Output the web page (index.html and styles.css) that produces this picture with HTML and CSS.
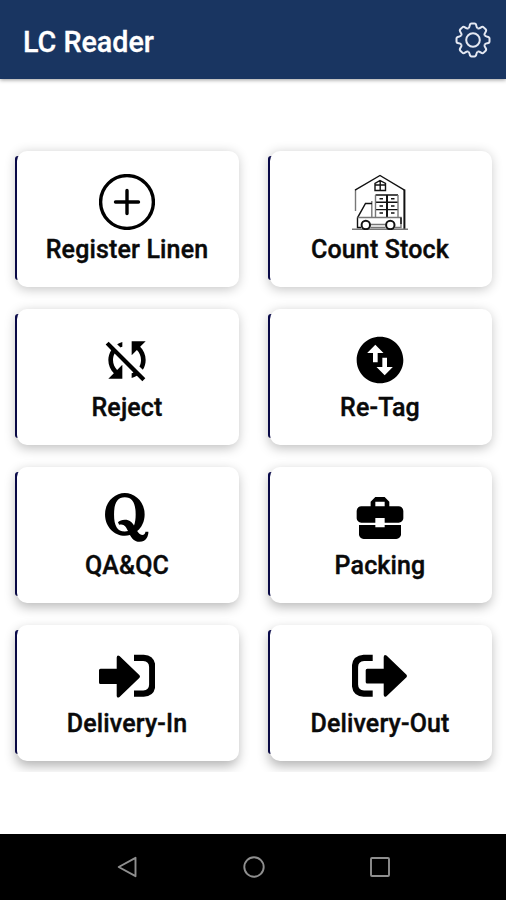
FILE: index.html
```html
<!DOCTYPE html>
<html lang="en">
<head>
    <meta charset="UTF-8">
    <meta name="viewport" content="width=device-width, initial-scale=1.0">
    <title>LC Reader</title>
    <link rel="stylesheet" href="styles.css">
</head>
<body>
    <div class="app">
        <header class="header">
            <h1 class="title">LC Reader</h1>
            <svg class="gear" viewBox="-18 -18 36 36">
                <defs>
                    <path id="tooth" d="M11.6 -4.8C12.6 -2.4 16.5 -4.4 16.5 -1.4V1.4C16.5 4.4 12.6 2.4 11.6 4.8"/>
                </defs>
                <use href="#tooth"/>
                <use href="#tooth" transform="rotate(45)"/>
                <use href="#tooth" transform="rotate(90)"/>
                <use href="#tooth" transform="rotate(135)"/>
                <use href="#tooth" transform="rotate(180)"/>
                <use href="#tooth" transform="rotate(225)"/>
                <use href="#tooth" transform="rotate(270)"/>
                <use href="#tooth" transform="rotate(315)"/>
                <circle r="6.8"/>
            </svg>
        </header>
        <main class="menu">
            <div class="card row1">
                <svg class="icon line" viewBox="0 0 56 56">
                    <circle cx="28" cy="28" r="26.4"/>
                    <path d="M28 16.5V39.5M16.5 28H39.5" stroke-linecap="round"/>
                </svg>
                <span class="label">Register Linen</span>
            </div>
            <div class="card row1">
                <svg class="icon thin" viewBox="0 0 56 56">
                    <path class="gray" d="M3.5 37V16"/>
                    <path d="M3 16.2L28 1.5L52.5 16.2"/>
                    <path class="thick" d="M52.4 15.5V55"/>
                    <path class="gray" d="M0 55.3H56"/>
                    <path d="M23 16.5V9.5L28 6.5L33.5 9.5V16.5ZM28.2 6.5V16.5M23 11H33.5"/>
                    <path d="M23.5 21H46M23.5 28.3H46M23.5 35.6H46"/>
                    <path class="gray" d="M23.5 21V43.5M46 21V43.5M19.8 27V43.5"/>
                    <path class="thick" d="M35 21V43.5"/>
                    <path d="M27.5 24.8H31M39 24.8H42.5M27.5 32H31M39 32H42.5M27.5 39H31M39 39H42.5"/>
                    <path d="M20 29.5H13.5L5.5 43.8V53.5H9"/>
                    <path class="gray" d="M5.5 43.5H49V53.5H43M18.5 50.5H33.5M18.5 53.5H33.5"/>
                    <path d="M49 43.5V50"/>
                    <circle cx="13.8" cy="51" r="4.2" stroke-width="2"/>
                    <circle cx="38.3" cy="51" r="4.2" stroke-width="2"/>
                </svg>
                <span class="label">Count Stock</span>
            </div>
            <div class="card row2">
                <svg class="icon" viewBox="0 0 24 24">
                    <path d="M10 6.35V4.26c-.8.21-1.55.54-2.23.96l1.46 1.46c.25-.12.5-.24.77-.33zm-7.14-.94l2.36 2.36C4.45 8.99 4 10.44 4 12c0 2.21.91 4.2 2.36 5.64L4 20h6v-6l-2.24 2.24C6.68 15.15 6 13.66 6 12c0-1 .25-1.94.68-2.77l8.08 8.08c-.25.13-.5.25-.77.34v2.09c.8-.21 1.55-.54 2.23-.96l2.36 2.36 1.27-1.27L4.14 4.14 2.86 5.41zM20 4h-6v6l2.24-2.24C17.32 8.85 18 10.34 18 12c0 1-.25 1.94-.68 2.77l1.46 1.46C19.55 15.01 20 13.56 20 12c0-2.21-.91-4.2-2.36-5.64L20 4z"/>
                </svg>
                <span class="label">Reject</span>
            </div>
            <div class="card row2">
                <svg class="icon" viewBox="0 0 24 24">
                    <path d="M12 22c5.52 0 10-4.48 10-10S17.52 2 12 2 2 6.48 2 12s4.48 10 10 10zM6.5 9L10 5.5 13.5 9H11v4H9V9H6.5zm11 6L14 18.5 10.5 15H13v-4h2v4h2.5z"/>
                </svg>
                <span class="label">Re-Tag</span>
            </div>
            <div class="card row3">
                <svg class="icon" viewBox="0 0 56 56">
                    <path transform="translate(5.3 -.5) scale(.1 .109)" d="M440.5 386.7h-29.3c-1.5 13.5-10.5 30.8-33 30.8-20.5 0-35.3-14.2-49.5-35.8 44.2-34.2 74.7-87.5 74.7-153C403.5 111.2 306.8 32 205 32 105.3 32 7.3 111.7 7.3 228.7c0 134.1 131.3 221.6 249 189C276 451.3 302 480 351.5 480c81.8 0 90.8-75.3 89-93.3zM297 329.2C277.5 300 253.3 277 205.5 277c-30.5 0-54.3 10-69 22.8l12.2 24.3c6.2-3 13-4 19.8-4 35.5 0 53.7 30.8 69.2 61.3-10 3-20.7 4.2-32.7 4.2-75 0-107.5-53-107.5-156.7C97.5 124.5 130 71 205 71c76.2 0 108.7 53.5 108.7 157.7.1 41.8-5.4 75.6-16.7 100.5z"/>
                </svg>
                <span class="label">QA&amp;QC</span>
            </div>
            <div class="card row3">
                <svg class="icon" viewBox="0 0 24 24">
                    <path d="M10 16v-1H3.01L3 19c0 1.11.89 2 2 2h14c1.11 0 2-.89 2-2v-4h-7v1h-4zm10-9h-4.01V5l-2-2h-4l-2 2v2H4c-1.1 0-2 .9-2 2v3c0 1.11.89 2 2 2h6v-2h4v2h6c1.1 0 2-.9 2-2V9c0-1.1-.9-2-2-2zm-6 0h-4V5h4v2z"/>
                </svg>
                <span class="label">Packing</span>
            </div>
            <div class="card row4">
                <svg class="icon" viewBox="0 0 56 56">
                    <path d="M1.5 20.7H17.7V9.5Q18 6.5 20.5 8L40.5 27.3Q41.5 28.5 40.5 29.7L20.5 49Q18 50.5 17.7 48V36H1.5Q0 36 0 34.5V22.2Q0 20.7 1.5 20.7Z"/>
                    <path class="bracket" d="M35 9.8H44.5Q53.2 10.5 53.2 19V36.5Q53.2 45 44.5 45.7H35"/>
                </svg>
                <span class="label">Delivery-In</span>
            </div>
            <div class="card row4">
                <svg class="icon" viewBox="0 0 56 56">
                    <path d="M15.2 20.7H31.7V9Q32 6 34.5 7.5L54.5 26.8Q55.5 28 54.5 29.2L34.5 48.2Q32 49.7 31.7 47V35.5H15.2Q13.7 35.5 13.7 34V22.2Q13.7 20.7 15.2 20.7Z"/>
                    <path class="bracket" d="M20.7 9.8H11.8Q3 10.5 3 19V36.5Q3 45 11.8 45.7H20.7"/>
                </svg>
                <span class="label">Delivery-Out</span>
            </div>
        </main>
        <nav class="navbar">
            <svg viewBox="0 0 24 24"><path d="M20.5 2.8V21.2L3.7 12Z"/></svg>
            <svg viewBox="0 0 24 24"><circle cx="12" cy="12" r="9.7"/></svg>
            <svg viewBox="0 0 24 24"><rect x="3" y="3" width="18" height="18" rx="1"/></svg>
        </nav>
    </div>
</body>
</html>
```
FILE: styles.css
```css
* {
    box-sizing: border-box;
}
body {
    margin: 0;
    background: #fff;
    font-family: Roboto, "Liberation Sans", sans-serif;
}
.app {
    display: flex;
    flex-direction: column;
    height: 900px;
}
.header {
    display: flex;
    align-items: center;
    justify-content: space-between;
    height: 79px;
    padding: 0 15px 0 23px;
    background: #193561;
    box-shadow: 0 1px 4px rgba(0, 0, 0, .4);
}
.title {
    margin: 0;
    padding-top: 4px;
    color: #fff;
    font-size: 28.7px;
    font-weight: 500;
    -webkit-text-stroke: .3px #fff;
}
.gear {
    width: 36px;
    height: 36px;
    fill: none;
    stroke: #e4e8f2;
    stroke-width: 2;
}
.menu {
    display: grid;
    grid-template-columns: 222px 222px;
    grid-auto-rows: 136px;
    gap: 22px 31px;
    height: 693px;
    padding: 72px 0 0 17px;
    overflow: hidden;
}
.card {
    position: relative;
    display: flex;
    flex-direction: column;
    align-items: center;
    padding: 23px 2px 0 0;
    border-radius: 10px;
    background: #fff;
}
/* navy edge on the left side of the card */
.card::before {
    content: '';
    position: absolute;
    left: -2px;
    top: 5px;
    bottom: 7px;
    width: 4px;
    z-index: -1;
    border-radius: 3px 0 0 3px;
    background: #0b0b50;
}
.row1 {
    box-shadow: -1px 2px 12px rgba(0, 0, 0, .24);
}
.row2 {
    box-shadow: -1px 3px 12px rgba(0, 0, 0, .26);
}
.row3 {
    box-shadow: -1px 4px 12px rgba(0, 0, 0, .28);
}
.row4 {
    box-shadow: -1px 5px 12px rgba(0, 0, 0, .3);
}
.icon {
    flex: none;
    width: 56px;
    height: 56px;
}
.line {
    fill: none;
    stroke: #000;
    stroke-width: 3.4;
}
.thin {
    fill: none;
    stroke: #111;
    stroke-width: 1.4;
}
.gray {
    stroke: #777;
}
.thick {
    stroke-width: 2;
}
.bracket {
    fill: none;
    stroke: #000;
    stroke-width: 6.2;
}
.label {
    margin-top: 5px;
    color: #0a0a0a;
    font-size: 25px;
    font-weight: 500;
    letter-spacing: .15px;
    line-height: 29px;
    white-space: nowrap;
    -webkit-text-stroke: .4px #0a0a0a;
}
.navbar {
    display: flex;
    justify-content: space-between;
    height: 66px;
    margin-top: auto;
    padding: 21px 114px 0 115px;
    background: #000;
}
.navbar svg {
    width: 24px;
    height: 24px;
    fill: none;
    stroke: #8f8f8f;
    stroke-width: 1.9;
    stroke-linejoin: round;
}
```
